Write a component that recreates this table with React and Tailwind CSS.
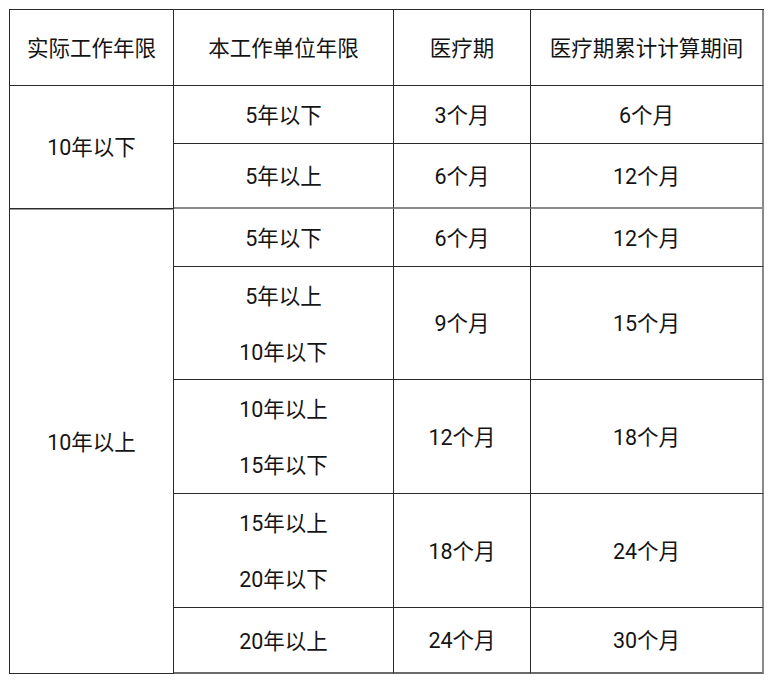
const rows = [
  { unit: ['5年以下'], period: '3个月', total: '6个月' },
  { unit: ['5年以上'], period: '6个月', total: '12个月' },
  { unit: ['5年以下'], period: '6个月', total: '12个月' },
  { unit: ['5年以上', '10年以下'], period: '9个月', total: '15个月' },
  { unit: ['10年以上', '15年以下'], period: '12个月', total: '18个月' },
  { unit: ['15年以上', '20年以下'], period: '18个月', total: '24个月' },
  { unit: ['20年以上'], period: '24个月', total: '30个月' },
];

const cell = 'flex flex-col items-center justify-center pt-[3px] border-r border-b border-[#2a2a2a]';
const last = 'flex flex-col items-center justify-center pt-[3px] border-r-2 border-b border-r-[#8a8a8a] border-b-[#2a2a2a]';

export default function App() {
  return (
    <div className="h-[687px] w-[774px] bg-white pl-[9px] pt-[9px] text-[21.5px] text-[#141414]" style={{ fontFamily: 'Roboto, "Noto Sans CJK SC", sans-serif' }}>
      <div className="grid w-[755px] grid-cols-[164px_220px_137px_233px] grid-rows-[76px_58px_65px_58px_113px_114px_114px_66px] border-t border-l border-[#2a2a2a]">
        <div className={cell}>实际工作年限</div>
        <div className={cell}>本工作单位年限</div>
        <div className={cell}>医疗期</div>
        <div className={last}>医疗期累计计算期间</div>

        <div className={`${cell} row-span-2`}>10年以下</div>
        {rows.slice(0, 2).map((r, i) => (
          <Row key={i} r={r} thick={i === 1} />
        ))}

        <div className={`${cell} row-span-5 border-t border-t-[#9a9a9a]`}>10年以上</div>
        {rows.slice(2).map((r, i) => (
          <Row key={i} r={r} bottom={i === 4} />
        ))}
      </div>
    </div>
  );
}

function Row({ r, thick, bottom }) {
  const extra = thick ? ' border-b-2 border-b-[#8a8a8a]' : bottom ? ' border-b-2 border-b-[#6a6a6a]' : '';
  return (
    <>
      <div className={cell + extra}>
        {r.unit.map((u) => (
          <div key={u} className="leading-[56px]">{u}</div>
        ))}
      </div>
      <div className={cell + extra}>{r.period}</div>
      <div className={last + extra}>{r.total}</div>
    </>
  );
}
